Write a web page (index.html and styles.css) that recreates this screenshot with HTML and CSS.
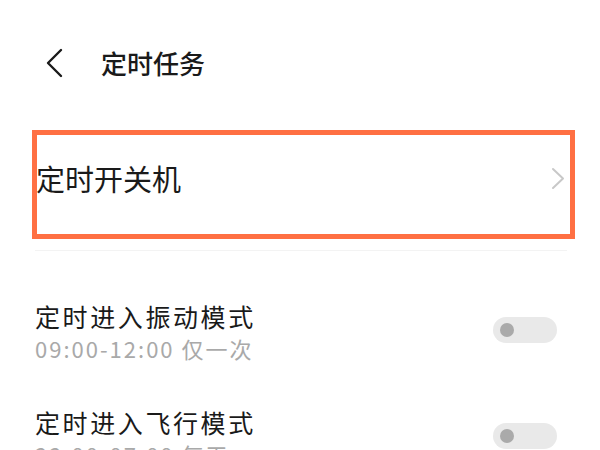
FILE: index.html
```html
<!DOCTYPE html>
<html lang="zh-CN">
<head>
<meta charset="utf-8">
<link rel="stylesheet" href="styles.css">
</head>
<body>
<div class="page">
  <header class="header">
    <svg class="back" width="20" height="30" viewBox="0 0 20 30"><path d="M17 2 L4 15 L17 28" fill="none" stroke="#1a1a1a" stroke-width="2.4" stroke-linecap="round" stroke-linejoin="round"/></svg>
    <h1 class="title">定时任务</h1>
  </header>
  <div class="hl-item">
    <span class="hl-text">定时开关机</span>
    <svg class="chev" width="14" height="23" viewBox="0 0 14 23"><path d="M2 2 L12 11.5 L2 21" fill="none" stroke="#c8c8c8" stroke-width="2" stroke-linecap="round" stroke-linejoin="round"/></svg>
  </div>
  <div class="divider"></div>
  <div class="row">
    <div class="row-text">
      <div class="row-title">定时进入振动模式</div>
      <div class="row-sub">09:00-12:00 仅一次</div>
    </div>
    <div class="toggle"><span class="knob"></span></div>
  </div>
  <div class="row">
    <div class="row-text">
      <div class="row-title">定时进入飞行模式</div>
      <div class="row-sub">22:00-07:00 每天</div>
    </div>
    <div class="toggle"><span class="knob"></span></div>
  </div>
</div>
</body>
</html>
```
FILE: styles.css
```css
html, body {
  margin: 0;
  padding: 0;
  background: #ffffff;
}
body {
  font-family: "Noto Sans CJK SC", "Noto Sans", sans-serif;
  color: #1a1a1a;
  width: 600px;
  height: 450px;
  overflow: hidden;
}
.page {
  display: flex;
  flex-direction: column;
  padding: 0 25px 0 32px;
}
.header {
  height: 126px;
  display: flex;
  align-items: center;
}
.back {
  margin-left: 12px;
  flex: none;
}
.title {
  margin: 0 0 0 37px;
  font-size: 26px;
  font-weight: 500;
  line-height: 36px;
}
.hl-item {
  margin-top: 4px;
  height: 99px;
  border: 5px solid #ff7043;
  display: flex;
  align-items: center;
  justify-content: space-between;
  padding-right: 5px;
}
.hl-text {
  font-size: 29px;
  line-height: 40px;
  margin-left: -1px;
  margin-top: -14px;
}
.chev {
  margin-top: -12px;
}
.divider {
  margin: 11px 8px 0 3px;
  height: 1px;
  background: #f3f3f3;
}
.row {
  height: 106px;
  display: flex;
  align-items: center;
  justify-content: space-between;
  padding-left: 3px;
  padding-right: 18px;
}
.divider + .row {
  margin-top: 29px;
}
.row-text {
  display: flex;
  flex-direction: column;
  margin-top: -4px;
}
.row-title {
  font-size: 25px;
  line-height: 34px;
  letter-spacing: 2.6px;
}
.row-sub {
  font-size: 22px;
  line-height: 30px;
  letter-spacing: 2px;
  color: #a9a9a9;
}
.toggle {
  width: 64px;
  height: 26px;
  border-radius: 13px;
  background: #e9e9e9;
  display: flex;
  align-items: center;
  padding-left: 7px;
  box-sizing: border-box;
  margin-top: -6px;
}
.knob {
  width: 14px;
  height: 14px;
  border-radius: 50%;
  background: #aaaaaa;
}
```
